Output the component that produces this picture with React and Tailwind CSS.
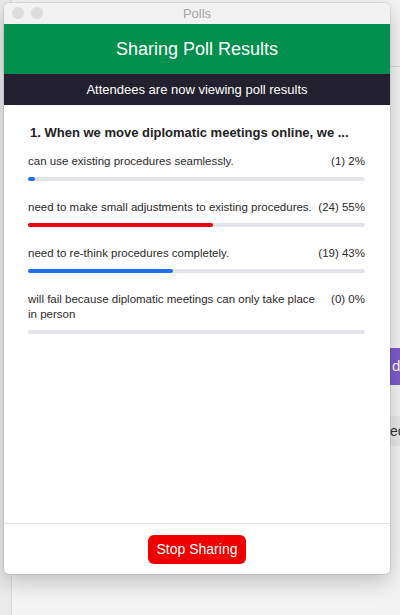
const options = [
  { text: "can use existing procedures seamlessly.", count: 1, pct: 2, color: "bg-[#1f6ff0]" },
  { text: "need to make small adjustments to existing procedures.", count: 24, pct: 55, color: "bg-[#ec0010]" },
  { text: "need to re-think procedures completely.", count: 19, pct: 43, color: "bg-[#1f6ff0]" },
  { text: "will fail because diplomatic meetings can only take place in person", count: 0, pct: 0, color: "bg-[#1f6ff0]" },
];

const App = () => {
  return (
    <div className="relative w-[400px] h-[615px] overflow-hidden bg-[#f4f4f4] font-['Liberation_Sans',Arial,sans-serif]">
      {/* app behind the window */}
      <div className="absolute left-0 top-0 w-[12px] h-[615px] bg-[#ebebeb] border-r border-[#dddddd]" />
      <div className="absolute left-[380px] top-[66px] w-[20px] h-px bg-[#d8d8d8]" />
      <div className="absolute left-[380px] top-[348px] w-[20px] h-[37px] bg-[#7d5bcb] flex items-center pl-[12px] text-[15px] text-white">d</div>
      <div className="absolute left-[390px] top-[416px] w-[10px] h-[30px] bg-[#e9e9e9] flex items-center text-[14px] text-[#333] whitespace-nowrap">ec</div>

      {/* Polls window */}
      <div className="absolute left-[4px] top-[3px] w-[386px] h-[571px] rounded-[5px] bg-white overflow-hidden flex flex-col shadow-[0_8px_22px_rgba(0,0,0,0.22),0_0_0_1px_rgba(0,0,0,0.08)]">
        <div className="relative h-[21px] shrink-0 bg-[#f2f2f2] flex items-center justify-center text-[13px] text-[#a5a5a5]">
          <div className="absolute left-[8px] top-[4px] flex gap-[7px]">
            <span className="w-[12px] h-[12px] rounded-full bg-[#dcdcdc]" />
            <span className="w-[12px] h-[12px] rounded-full bg-[#dcdcdc]" />
          </div>
          Polls
        </div>
        <div className="h-[50px] shrink-0 bg-[#008f4c] flex items-center justify-center text-[18px] text-white">
          Sharing Poll Results
        </div>
        <div className="h-[31px] shrink-0 bg-[#23212f] flex items-center justify-center text-[13px] text-white">
          Attendees are now viewing poll results
        </div>

        <div className="flex-1 pl-[24px] pr-[25px] pt-[18px]">
          <div className="pl-[2px] text-[13px] font-bold text-[#222]">
            1. When we move diplomatic meetings online, we ...
          </div>
          <div className="mt-[11px] flex flex-col gap-[19px]">
            {options.map((o, i) => (
              <div key={i}>
                <div className="flex justify-between gap-[5px] text-[11.5px] leading-[15px] text-[#2a2a2a]">
                  <span>{o.text}</span>
                  <span className="shrink-0">({o.count}) {o.pct}%</span>
                </div>
                <div className="mt-[8px] h-[4px] rounded-full bg-[#e3e3ea]">
                  <div
                    className={`h-[4px] rounded-full ${o.color}`}
                    style={{ width: o.pct === 0 ? 0 : `${Math.max(o.pct, 1.6)}%` }}
                  />
                </div>
              </div>
            ))}
          </div>
        </div>

        <div className="h-[51px] shrink-0 border-t border-[#e6e6e6] flex items-center justify-center">
          <button className="h-[29px] px-[9px] rounded-[6px] bg-[#ee0000] text-[14px] text-white">
            Stop Sharing
          </button>
        </div>
      </div>
    </div>
  );
};

export default App;
